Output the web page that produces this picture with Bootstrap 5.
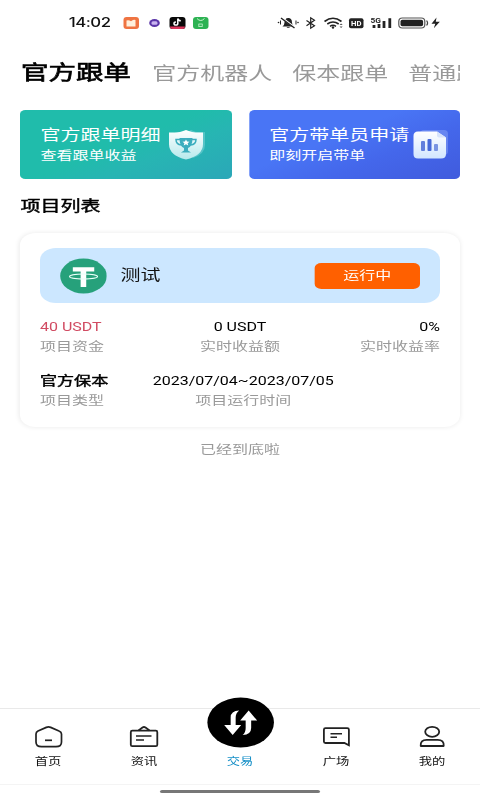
<!DOCTYPE html>
<html lang="zh-CN">
<head>
<meta charset="utf-8">
<meta name="viewport" content="width=device-width, initial-scale=1">
<title>官方跟单</title>
<link href="https://cdn.jsdelivr.net/npm/bootstrap@5.3.0/dist/css/bootstrap.min.css" rel="stylesheet">
<style>
html,body{width:480px;height:800px;overflow:hidden;background:#fff}
body{font-family:Roboto,"Noto Sans CJK SC",sans-serif;color:#111;font-size:12px}
/* phone canvas: 360 units wide, widened to the window */
.phone{width:360px;height:800px;transform:scaleX(1.33333);transform-origin:0 0;overflow:hidden}
svg{display:block;flex:none}
.status{height:46px;padding-left:51.5px;padding-right:28.8px}
.clock{font:500 12.6px/46px Inter,sans-serif;width:38.2px;letter-spacing:-.35px;white-space:nowrap}
.tabs{height:54px;margin:0 15px;padding-left:.8px;gap:15px;overflow:hidden;white-space:nowrap;font-size:18px;color:#999}
.tabs .on{font-size:20.6px;margin-right:1px;color:#000;-webkit-text-stroke:.65px #000}
.banners{margin:10px 15px 0;gap:13px}
.banner{flex:none;width:158.5px;height:69px;border-radius:4px;color:#fff;position:relative;padding:14px 0 0 15.4px;white-space:nowrap}
.b-teal{background:linear-gradient(152deg,#20bcab 0 48%,#27b5b3 66%,#2ba7b8 100%)}
.b-blue{background:linear-gradient(152deg,#4975f5 0 40%,#4467eb 65%,#405bdd 100%)}
.b-main{font-size:15px;line-height:22px}
.b-sub{font-size:12px;line-height:21px}
.banner svg{position:absolute;top:18px}
.heading{font-size:15px;font-weight:400;-webkit-text-stroke:.4px #000;line-height:24px;margin:15px 15px 0 15.4px;color:#000}
.project{margin:15px 15px 0;height:194px;border-radius:12px;box-shadow:0 0 5px rgba(0,0,0,.085);padding:15px;background:#fff}
.coin-bar{height:55px;border-radius:12px;background:#cce7ff;padding:0 15px}
.coin-name{font-size:15px;color:#111;margin-left:10px}
.state{width:79px;height:26px;border-radius:5px;background:#ff6000;color:#fff;line-height:26px;font-size:12px}
.facts{line-height:20px;white-space:nowrap;margin-top:14px}
.facts .val{color:#000}
.facts .lab{color:#999}
.facts .mid{margin-left:12px}
.facts .kind{width:84.5px}
.facts .kind .val{font-size:12.8px;-webkit-text-stroke:.4px #000}
.facts .red{color:#d14b62}
.bottom-note{color:#999;line-height:20px;margin-top:13px}
.bar{height:77px;border-top:1px solid #e9e9e9;border-bottom:1px solid #f4f4f4;margin-top:248px;font-size:10px;color:#111}
.bar .item{flex:1;padding-top:14px;line-height:20px}
.bar .trade{padding-top:0;color:#168fc7}
.trade svg{margin-top:-12px;margin-bottom:4px}
.homeline{width:120px;height:3px;border-radius:2px;background:#777;margin:5px auto 0}
</style>
<script src="https://cdn.jsdelivr.net/npm/bootstrap@5.3.0/dist/js/bootstrap.bundle.min.js"></script>
</head>
<body>
<div class="phone">
  <header class="status d-flex align-items-center">
    <span class="clock">14:02</span>
    <svg width="69" height="30" viewBox="120 8 92 30" preserveAspectRatio="none">
      <rect x="123.500" y="17" width="15.500" height="12" rx="3" fill="#ef7442"/>
      <path d="M126.500 20.500q2.500-.8 4.500.8 2-2.300 4.500-1.300v6.500h-9z" fill="#fff0dc"/>
      <ellipse cx="154.500" cy="23" rx="5.300" ry="4" fill="#5a35a8"/><rect x="151.500" y="21.300" width="6" height="3.400" rx="1.500" fill="#c9b4f0"/>
      <rect x="169.500" y="17" width="16" height="12" rx="3" fill="#090909"/>
      <path d="M170 26.500h15q0 2.500-2.500 2.500h-10q-2.500 0-2.500-2.500z" fill="#d9355b"/>
      <path d="M177.800 18.500v5a1.900 1.600 0 1 1-1.900-1.600M177.800 18.500q.5 2.200 3 2.300" fill="none" stroke="#fff" stroke-width="1.500"/>
      <rect x="193" y="17" width="15.500" height="12" rx="3" fill="#2db253"/>
      <path d="M197 18.500q3.700 4 7.500 0" fill="none" stroke="#c8f5ce" stroke-width="1"/><path d="M198.500 24h4M198.500 26.500h4M198.800 24v2.500M202.300 24v2.500" stroke="#b9efc4" stroke-width=".9"/>
    </svg>
    <svg class="ms-auto" width="124.500" height="30" viewBox="276 8 166 30" preserveAspectRatio="none">
      <g fill="#222">
        <path d="M282.500 26.500q2-1.500 2-4 0-4.500 3.800-4.500 3.700 0 3.700 4.500 0 2.500 2 4zM286.500 27.200h3.500q-1.700 1.800-3.500 0z"/>
        <circle cx="278.500" cy="22.500" r=".8"/><circle cx="298" cy="22.500" r=".8"/>
        <path d="M280.500 20.500v4M296 20.500v4" stroke="#222"/>
      </g>
      <path d="M281.500 17.500l14 10.500" stroke="#fff" stroke-width="2"/><path d="M281 18l13.500 10" stroke="#222" stroke-width="1.400"/>
      <path d="M306.500 20.500l8 5.200-3.800 2.500V17.800l3.800 2.500-8 5.400" fill="none" stroke="#222" stroke-width="1.200"/>
      <path d="M324.500 21.500q8.500-6.500 17 0M327.300 24q5.700-4 11.400 0M330 26.300q3-2 6 0" fill="none" stroke="#222" stroke-width="1.600"/><circle cx="333" cy="27.500" r="1.200" fill="#222"/>
      <path d="M339.500 25l1.600-1.500 1.600 1.500zM339.500 26.500l1.600 1.500 1.600-1.500z" fill="#555"/>
      <rect x="349" y="18.300" width="14.500" height="10" rx="2" fill="#222"/>
      <text x="351" y="26.200" font-size="8" font-weight="700" fill="#fff" textLength="10.500" lengthAdjust="spacingAndGlyphs">HD</text>
      <text x="370.500" y="22.800" font-size="7" font-weight="700" fill="#222" textLength="10.500" lengthAdjust="spacingAndGlyphs">5G</text>
      <path d="M374 25v3M379 24v4M384 21v7M389.800 18.300V28" stroke="#222" stroke-width="2.800"/>
      <rect x="398.800" y="18" width="26" height="10" rx="3.500" fill="none" stroke="#555" stroke-width="1.200"/><rect x="400.500" y="19.700" width="22.600" height="6.600" rx="1.800" fill="#222"/>
      <path d="M426.600 20.500q2 2.500 0 5" fill="none" stroke="#444" stroke-width="1.200"/>
      <path d="M436.500 17.500l-5 6.200h3.800l-1.500 4.500 6-6.400h-4z" fill="#222"/>
    </svg>
  </header>

  <nav class="tabs d-flex align-items-center">
    <span class="on">官方跟单</span><span>官方机器人</span><span>保本跟单</span><span>普通跟单</span>
  </nav>

  <section class="banners d-flex">
    <div class="banner b-teal">
      <div class="b-main">官方跟单明细</div><div class="b-sub">查看跟单收益</div>
      <svg style="left:111px" width="30" height="34" viewBox="168 128 40 34" preserveAspectRatio="none">
        <defs><linearGradient id="shield" x2="0" y2="1"><stop stop-color="#fff"/><stop offset="1" stop-color="#b5e9ec"/></linearGradient></defs>
        <path d="M175 132q12 1 16-2 5 3 14 2v13q0 9-12 13z" fill="#73ced4" opacity=".6"/>
        <path d="M169 132.500q11 .5 17-2.500 6 3 17 2.500V144q0 11.500-17 15.500-17-4-17-15.500z" fill="url(#shield)"/>
        <path d="M179.500 138h13q0 8.500-4.500 10v2.500l3 2h-10l3-2V148q-4.500-1.500-4.500-10z" fill="#3badbe"/>
        <path d="M180 139.500h-4q0 5 5.500 5.500M192 139.500h4q0 5-5.500 5.500" fill="none" stroke="#3badbe" stroke-width="1.500"/>
        <path d="M186 139.500l1 2 2.500.2-1.900 1.500.7 2.200-2.300-1.200-2.300 1.200.7-2.200-1.900-1.500 2.500-.2z" fill="#fff"/>
      </svg>
    </div>
    <div class="banner b-blue">
      <div class="b-main">官方带单员申请</div><div class="b-sub">即刻开启带单</div>
      <svg style="left:122.500px" width="30" height="34" viewBox="412 128 40 34" preserveAspectRatio="none">
        <defs><linearGradient id="sheet" x2="0" y2="1"><stop stop-color="#fff"/><stop offset="1" stop-color="#d2e6ff"/></linearGradient></defs>
        <rect x="420" y="130" width="28" height="25" rx="4" fill="#7f9bf5" opacity=".6"/>
        <path d="M418 131.500h19l9 6V154q0 4.500-5 4.500h-23q-4.500 0-4.500-4.500v-18q0-4.500 4.500-4.500z" fill="url(#sheet)"/>
        <path d="M437 131.500l9 6h-6q-3 0-3-2z" fill="#d7e4fc"/>
        <rect x="421" y="141" width="4" height="10" rx="1" fill="#617fdc"/><rect x="427.500" y="139" width="4" height="12" rx="1" fill="#4669d8"/><rect x="434" y="144" width="4" height="7" rx="1" fill="#7994e2"/>
      </svg>
    </div>
  </section>

  <h1 class="heading">项目列表</h1>

  <section class="project">
    <div class="coin-bar d-flex align-items-center">
      <svg width="35.300" height="36" viewBox="60 257 47 36" preserveAspectRatio="none">
        <ellipse cx="83.500" cy="275" rx="23.300" ry="17.500" fill="#26a17b"/>
        <path d="M72.800 266.300h21.400v4.200h-8V286h-5.600v-15.500h-7.800z" fill="#fff"/>
        <ellipse cx="83.500" cy="275.500" rx="14" ry="2.500" fill="none" stroke="#e8fff8" stroke-width="1"/>
      </svg>
      <span class="coin-name">测试</span>
      <span class="state ms-auto text-center">运行中</span>
    </div>
    <div class="facts d-flex justify-content-between">
      <div><div class="val red">40 USDT</div><div class="lab">项目资金</div></div>
      <div class="mid text-center"><div class="val">0 USDT</div><div class="lab">实时收益额</div></div>
      <div class="text-end"><div class="val">0%</div><div class="lab">实时收益率</div></div>
    </div>
    <div class="facts d-flex">
      <div class="kind"><div class="val">官方保本</div><div class="lab">项目类型</div></div>
      <div class="text-center"><div class="val">2023/07/04~2023/07/05</div><div class="lab">项目运行时间</div></div>
    </div>
  </section>

  <div class="bottom-note text-center">已经到底啦</div>

  <nav class="bar d-flex text-center">
    <div class="item d-flex flex-column align-items-center">
      <svg width="24" height="29" viewBox="32 723 32 29" preserveAspectRatio="none"><path d="M38 731l8.300-3.600q2.200-.9 4.400 0L59 731q2.500 1 2.500 3v8q0 4.700-5.500 4.700H41.500q-5.500 0-5.500-4.700v-8q0-2 2-3z" fill="none" stroke="#222" stroke-width="1.700"/><path d="M45 740.300h7" stroke="#222" stroke-width="1.700"/></svg>
      <span>首页</span>
    </div>
    <div class="item d-flex flex-column align-items-center">
      <svg width="24" height="29" viewBox="128 723 32 29" preserveAspectRatio="none"><rect x="130.800" y="730.700" width="26.500" height="15.500" rx="1.500" fill="none" stroke="#222" stroke-width="1.800"/><path d="M138.500 730.500l4-3q1.500-1 3 0l4 3" fill="none" stroke="#222" stroke-width="1.800"/><path d="M136 736h15.500M136 740h8" stroke="#222" stroke-width="1.600"/></svg>
      <span>资讯</span>
    </div>
    <div class="item trade d-flex flex-column align-items-center">
      <svg width="51" height="51" viewBox="206 697 68 51" preserveAspectRatio="none"><ellipse cx="240" cy="722.500" rx="33.300" ry="25" fill="#000"/><path d="M238.500 710.500q-8.500.3-8.500 7v7.500h-6.500l8.500 10 8.500-10h-5.500v-7.500q0-4.500 3.500-7zM242 735q8.500-.3 8.500-7v-7.500h6l-8.500-10-8.500 10h5.500v7.500q0 4.500-3 7z" fill="#fff"/></svg>
      <span>交易</span>
    </div>
    <div class="item d-flex flex-column align-items-center">
      <svg width="24" height="29" viewBox="320 723 32 29" preserveAspectRatio="none"><path d="M325.500 728.200h21.800q1.600 0 1.600 1.500v15.500l-4.500-2.200h-18.900q-1.600 0-1.600-1.500v-11.800q0-1.500 1.600-1.500z" fill="none" stroke="#222" stroke-width="1.800"/><path d="M330.500 733.800h11.500M330.500 737.300h6.500" stroke="#222" stroke-width="1.600"/></svg>
      <span>广场</span>
    </div>
    <div class="item d-flex flex-column align-items-center">
      <svg width="24" height="29" viewBox="416 723 32 29" preserveAspectRatio="none"><ellipse cx="432.200" cy="731.800" rx="7" ry="5" fill="none" stroke="#222" stroke-width="1.800"/><path d="M420.700 746q-.5-6.200 6-6.200h11q6.500 0 6 6.200z" fill="none" stroke="#222" stroke-width="1.800" stroke-linejoin="round"/></svg>
      <span>我的</span>
    </div>
  </nav>
  <div class="homeline"></div>
</div>
</body>
</html>
